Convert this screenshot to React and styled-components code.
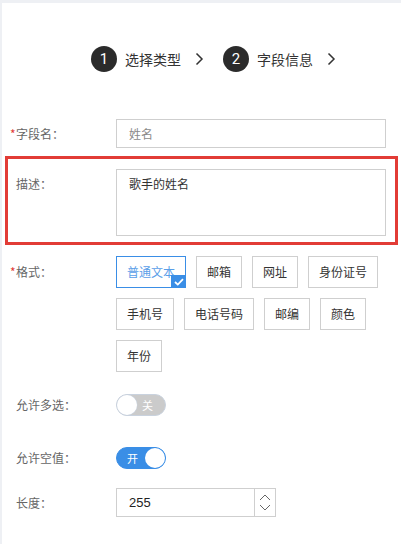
import React, { useState } from "react";
import styled, { createGlobalStyle } from "styled-components";

const GlobalStyle = createGlobalStyle`
  html, body {
    margin: 0;
    padding: 0;
    background: #eef0f4;
  }
  body {
    font-family: "Noto Sans CJK SC", "Noto Sans", sans-serif;
    color: #333;
  }
`;

const Panel = styled.div`
  margin: 3px 0 0 2px;
  background: #fff;
  height: 541px;
  position: relative;
  overflow: hidden;
`;

const EdgeMark = styled.div`
  position: absolute;
  left: -2px;
  top: 477px;
  width: 2px;
  height: 9px;
  background: #3a8ee6;
`;

const Steps = styled.div`
  display: flex;
  align-items: center;
  padding: 43px 0 0 89px;
  height: 26px;
`;

const StepCircle = styled.span`
  width: 26px;
  height: 26px;
  border-radius: 50%;
  background: #2b2b2b;
  color: #fff;
  font-family: Roboto, sans-serif;
  font-size: 15px;
  display: flex;
  align-items: center;
  justify-content: center;
`;

const StepText = styled.span`
  font-size: 14px;
  color: #333;
  margin-left: 8px;
`;

const Chevron = styled.svg`
  margin: 0 19px 0 14px;
`;

const Form = styled.div`
  padding: 0 0 0 3px;
  margin-top: 47px;
`;

const Row = styled.div`
  display: grid;
  grid-template-columns: 100px 270px;
  margin-top: ${(p) => p.$mt || 0}px;
  padding: ${(p) => (p.$boxed ? "10px 9px 6px 8px" : "0 12px 0 11px")};
  border: ${(p) => (p.$boxed ? "3px solid #e23c36" : "none")};
  width: 370px;
`;

const Label = styled.div`
  font-size: 12px;
  color: #666;
  line-height: ${(p) => p.$h || 29}px;
  position: relative;
  ${(p) =>
    p.$required &&
    `&::before {
      content: "*";
      color: #e23c36;
      position: absolute;
      left: -6px;
      top: 0;
    }`}
`;

const TextInput = styled.div`
  height: 27px;
  border: 1px solid #cfcfcf;
  padding: 0 12px;
  font-size: 12px;
  line-height: 27px;
  color: ${(p) => (p.$placeholder ? "#8a8a8a" : "#333")};
`;

const TextArea = styled.div`
  height: 53px;
  border: 1px solid #cfcfcf;
  padding: 6px 12px;
  font-size: 12px;
  line-height: 16px;
  color: #333;
`;

const Options = styled.div`
  display: flex;
  flex-wrap: wrap;
  gap: 10px 10px;
`;

const Option = styled.div`
  position: relative;
  height: 30px;
  padding: 0 10px;
  border: 1px solid ${(p) => (p.$active ? "#3a8ee6" : "#cfcfcf")};
  color: ${(p) => (p.$active ? "#5a9ee8" : "#333")};
  font-size: 12px;
  line-height: 30px;
  white-space: nowrap;
  cursor: pointer;
`;

const CheckCorner = styled.span`
  position: absolute;
  right: -1px;
  bottom: -1px;
  width: 15px;
  height: 13px;
  background: #3a8ee6;
  display: flex;
  align-items: center;
  justify-content: center;
`;

const Toggle = styled.div`
  position: relative;
  width: 48px;
  height: 20px;
  border-radius: 11px;
  border: 1px solid ${(p) => (p.$on ? "#3a8ee6" : "#c9d2de")};
  background: ${(p) => (p.$on ? "#3a8ee6" : "#cbcbcb")};
  display: flex;
  align-items: center;
  justify-content: ${(p) => (p.$on ? "flex-start" : "flex-end")};
  cursor: pointer;
`;

const ToggleText = styled.span`
  color: #fff;
  font-size: 11px;
  padding: ${(p) => (p.$on ? "0 0 0 10px" : "0 12px 0 0")};
`;

const Knob = styled.span`
  position: absolute;
  top: 0;
  ${(p) => (p.$on ? "right: 0;" : "left: 0;")}
  width: 20px;
  height: 20px;
  border-radius: 50%;
  background: #fff;
  box-shadow: 0 0 0 0.5px ${(p) => (p.$on ? "#3a8ee6" : "#c9d2de")};
`;

const ToggleWrap = styled.div`
  display: flex;
  align-items: center;
`;

const NumberBox = styled.div`
  display: flex;
  width: 158px;
  height: 27px;
  border: 1px solid #cfcfcf;
`;

const NumberValue = styled.div`
  flex: 1;
  padding: 0 12px;
  font-size: 13px;
  line-height: 27px;
  font-family: "Liberation Sans", Arial, sans-serif;
  color: #222;
`;

const Spinner = styled.div`
  width: 20px;
  border-left: 1px solid #cfcfcf;
  display: flex;
  flex-direction: column;
  align-items: center;
  justify-content: center;
  gap: 3px;
`;

const formats = [
  "普通文本",
  "邮箱",
  "网址",
  "身份证号",
  "手机号",
  "电话号码",
  "邮编",
  "颜色",
  "年份",
];

const ChevronIcon = () => (
  <Chevron width="9" height="14" viewBox="0 0 9 14">
    <path d="M1.5 1.5L7 7l-5.5 5.5" fill="none" stroke="#333" strokeWidth="1.5" />
  </Chevron>
);

const Switch = ({ on, onText, offText, onClick }) => (
  <ToggleWrap>
    <Toggle $on={on} onClick={onClick}>
      <ToggleText $on={on}>{on ? onText : offText}</ToggleText>
      <Knob $on={on} />
    </Toggle>
  </ToggleWrap>
);

export default function App() {
  const [fmt, setFmt] = useState("普通文本");
  const [multi, setMulti] = useState(false);
  const [nullable, setNullable] = useState(true);

  return (
    <>
      <GlobalStyle />
      <Panel>
        <EdgeMark />
        <Steps>
          <StepCircle>1</StepCircle>
          <StepText>选择类型</StepText>
          <ChevronIcon />
          <StepCircle>2</StepCircle>
          <StepText>字段信息</StepText>
          <ChevronIcon />
        </Steps>

        <Form>
          <Row>
            <Label $required>字段名：</Label>
            <TextInput $placeholder>姓名</TextInput>
          </Row>

          <Row $boxed $mt={8}>
            <Label $h={30}>描述：</Label>
            <TextArea>歌手的姓名</TextArea>
          </Row>

          <Row $mt={11}>
            <Label $required $h={32}>格式：</Label>
            <Options>
              {formats.map((f) => (
                <Option key={f} $active={f === fmt} onClick={() => setFmt(f)}>
                  {f}
                  {f === fmt && (
                    <CheckCorner>
                      <svg width="10" height="8" viewBox="0 0 10 8">
                        <path d="M1 4l2.8 2.6L9 1.2" fill="none" stroke="#fff" strokeWidth="1.8" />
                      </svg>
                    </CheckCorner>
                  )}
                </Option>
              ))}
            </Options>
          </Row>

          <Row $mt={22}>
            <Label $h={22}>允许多选：</Label>
            <Switch on={multi} onText="开" offText="关" onClick={() => setMulti(!multi)} />
          </Row>

          <Row $mt={31}>
            <Label $h={22}>允许空值：</Label>
            <Switch on={nullable} onText="开" offText="关" onClick={() => setNullable(!nullable)} />
          </Row>

          <Row $mt={19}>
            <Label>长度：</Label>
            <NumberBox>
              <NumberValue>255</NumberValue>
              <Spinner>
                <svg width="12" height="7" viewBox="0 0 12 7">
                  <path d="M1 6l5-5 5 5" fill="none" stroke="#666" strokeWidth="1" />
                </svg>
                <svg width="12" height="7" viewBox="0 0 12 7">
                  <path d="M1 1l5 5 5-5" fill="none" stroke="#666" strokeWidth="1" />
                </svg>
              </Spinner>
            </NumberBox>
          </Row>
        </Form>
      </Panel>
    </>
  );
}
